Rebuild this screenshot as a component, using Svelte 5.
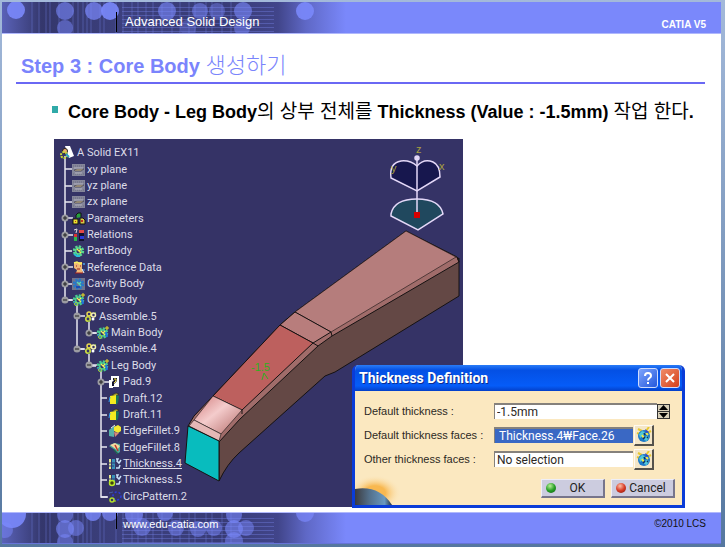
<script>
  const tree = [
    { label: 'A Solid EX11', level: 0, icon: 'part' },
    { label: 'xy plane', level: 1, icon: 'plane' },
    { label: 'yz plane', level: 1, icon: 'plane' },
    { label: 'zx plane', level: 1, icon: 'plane' },
    { label: 'Parameters', level: 1, icon: 'params' },
    { label: 'Relations', level: 1, icon: 'relations' },
    { label: 'PartBody', level: 1, icon: 'gear' },
    { label: 'Reference Data', level: 1, icon: 'reference' },
    { label: 'Cavity Body', level: 1, icon: 'cavity' },
    { label: 'Core Body', level: 1, icon: 'body' },
    { label: 'Assemble.5', level: 2, icon: 'assemble' },
    { label: 'Main Body', level: 3, icon: 'body' },
    { label: 'Assemble.4', level: 2, icon: 'assemble' },
    { label: 'Leg Body', level: 3, icon: 'body' },
    { label: 'Pad.9', level: 4, icon: 'pad' },
    { label: 'Draft.12', level: 4, icon: 'draft' },
    { label: 'Draft.11', level: 4, icon: 'draft' },
    { label: 'EdgeFillet.9', level: 4, icon: 'fillet' },
    { label: 'EdgeFillet.8', level: 4, icon: 'filletCut' },
    { label: 'Thickness.4', level: 4, icon: 'thickness', current: true },
    { label: 'Thickness.5', level: 4, icon: 'thicknessGear' },
    { label: 'CircPattern.2', level: 4, icon: 'pattern' },
  ];

  const planeTicks = [169, 186, 202, 251];
  const featureTicks = [398, 415, 431, 447, 464, 480, 497];
  const knots = [
    [65, 218, '+'], [65, 235, '+'], [65, 267, '+'], [65, 284, '+'], [65, 300, '-'],
    [77, 316, '-'], [89, 333, '+'], [77, 349, '-'], [89, 365, '-'], [101, 382, '+'],
  ];

  const topDots = [
    [14, 8, 9, 0.9], [63, 9, 9, 0.6], [63, 26, 8, 0.5], [92, 9, 9, 0.7], [108, 9, 9, 0.9],
    [165, 9, 9, 0.6], [198, 9, 8, 0.5], [215, 9, 8, 0.4], [241, 9, 9, 0.6], [240, 26, 8, 0.5],
    [186, 26, 8, 0.3], [303, 9, 9, 0.9],
  ];
  const bottomDots = [
    [10, 1, 14, 0.9], [3, 17, 8, 0.5], [63, 2, 8, 0.5], [63, 16, 9, 0.6], [63, 29, 8, 0.5],
    [74, 15, 8, 0.5], [91, 0, 8, 0.8], [108, 0, 8, 0.7], [132, 2, 9, 0.7], [140, 14, 9, 0.5],
    [163, 0, 8, 0.6], [174, 15, 8, 0.5], [196, 16, 8, 0.5], [212, 15, 8, 0.5], [232, 2, 8, 0.6],
    [232, 16, 9, 0.6], [232, 28, 9, 0.5], [244, 15, 8, 0.5], [303, 0, 9, 0.7],
  ];
  const bars = [30, 37, 44, 48, 57, 71, 76, 81, 85, 89, 98, 102, 114, 121, 130, 136, 144, 151, 160, 170, 178, 187, 193, 204, 210, 220, 229];
</script>

{#snippet band(id, dots)}
  <svg class="band-art" width="400" height="32" viewBox="0 0 400 32" aria-hidden="true">
    <defs>
      <linearGradient id={id}>
        <stop offset="0" stop-color="#5a62b8" />
        <stop offset="0.1" stop-color="#34376c" />
        <stop offset="0.3" stop-color="#3c407e" />
        <stop offset="0.55" stop-color="#383b76" />
        <stop offset="0.69" stop-color="#41458a" />
        <stop offset="0.76" stop-color="#5f68c6" />
        <stop offset="0.86" stop-color="#7a88fb" />
      </linearGradient>
    </defs>
    <rect width="400" height="32" fill="url(#{id})" />
    {#each bars as x}
      <path d="M{x} 0V32" stroke="#7682e6" stroke-opacity="0.4" />
    {/each}
    {#each [5, 9, 13, 17, 21, 25, 29] as y}
      <path d="M120 {y}.5H272" stroke="#7682e6" stroke-opacity="0.4" />
    {/each}
    {#each dots as [cx, cy, r, alpha]}
      <circle {cx} {cy} {r} fill="#7a88fb" fill-opacity={alpha} />
    {/each}
  </svg>
{/snippet}

{#snippet gear(main, accent)}
  <circle cx="6.500" cy="7" r="4" fill="none" stroke={main} stroke-width="3.400" stroke-dasharray="2 1.100" />
  <circle cx="6.500" cy="7" r="3" fill="none" stroke={main} stroke-width="1.500" />
  <path d="M5 5l4 4M9 5l-2 2" stroke={accent} stroke-width="1.300" />
{/snippet}

{#snippet icon(kind)}
  <svg class="icon" width="14" height="14" viewBox="0 0 14 14" aria-hidden="true">
    {#if kind === 'part'}
      <path d="M5 0h5l4 10-5 2-2-6z" fill="#fff" />
      <circle cx="5" cy="5" r="2.500" fill="#eeb070" stroke="#222" />
      <circle cx="4" cy="9" r="3" fill="none" stroke="#c8d838" stroke-width="2" stroke-dasharray="2 1" />
      <path d="M6 8l3 3" stroke="#30a8c0" stroke-width="2" />
    {:else if kind === 'plane'}
      <rect x="0" y="1" width="13" height="12" fill="#85869a" />
      <path d="M1 3h12M1 11h12" stroke="#6a6b80" stroke-dasharray="1 1" />
      <path d="M2 7l3-1h7l-3 2H3z" fill="#c0ac80" stroke="#4c4d60" stroke-width="0.800" />
      <path d="M2 5h9M3 10h7" stroke="#b4b4c0" />
    {:else if kind === 'params'}
      <path d="M4 6V3l2-2h3v4" fill="#28a040" stroke="#111" />
      <rect x="1" y="7" width="5" height="5" fill="#e8e030" stroke="#111" />
      <path d="M8 6h3l2 2v4H8z" fill="#d8c848" stroke="#111" />
      <path d="M3 9h1v1H3zM9 8h2v2H9z" fill="#c03020" />
    {:else if kind === 'relations'}
      <path d="M2 2l3-1-1 4M2 7h3" stroke="#ddd" fill="none" />
      <rect x="2" y="6" width="3" height="3" fill="#d83030" />
      <rect x="2" y="9" width="3" height="4" fill="#28b848" />
      <rect x="7" y="3" width="5" height="10" fill="#12122c" />
      <rect x="7" y="2" width="5" height="3" fill="#e04848" />
      <rect x="8" y="8" width="4" height="3" fill="#2838d8" />
    {:else if kind === 'gear'}
      {@render gear('#58d890', '#f0e850')}
      <path d="M2 10l3 2h3" stroke="#28c0d8" stroke-width="2" fill="none" />
    {:else if kind === 'reference'}
      <path d="M2 1h8v7l1 4H4l1-3-3-2z" fill="#f0b878" />
      <path d="M2 2l3-1 3 2 2-1" stroke="#f8f060" stroke-width="1.500" fill="none" />
      <path d="M4 5h1M8 5h1M5 8h3M3 12h8" stroke="#a02020" fill="none" />
      <path d="M10 8l2 4" stroke="#fff" />
      <path d="M11 3h2M12 2v2M11 9h2" stroke="#48a0f0" />
    {:else if kind === 'cavity'}
      <rect x="0" y="1" width="13" height="12" fill="#70748c" />
      {@render gear('#2878c8', '#60d8b0')}
      <path d="M4 10h4" stroke="#1840b0" stroke-width="1.500" fill="none" />
    {:else if kind === 'body'}
      {@render gear('#48cc90', '#f0f060')}
      <path d="M2 9l3 3M10 6l1 5" stroke="#2070e0" stroke-width="2" />
      <circle cx="4" cy="11" r="1.500" fill="none" stroke="#a8d830" />
      <path d="M11 0v4M9 2h4" stroke="#f0e020" />
    {:else if kind === 'assemble'}
      <circle cx="5" cy="4" r="2" fill="none" stroke="#e8d850" stroke-width="1.500" />
      <circle cx="9.500" cy="5" r="2" fill="none" stroke="#f4f0b0" stroke-width="1.500" />
      <circle cx="4" cy="9" r="2.200" fill="none" stroke="#d0e040" stroke-width="1.600" />
      <circle cx="9" cy="9" r="1.500" fill="#fff" />
      <path d="M4 11h2M11 3l1-1" stroke="#70a848" />
    {:else if kind === 'pad'}
      <path d="M3 1h8v11H3z" fill="#fff" />
      <path d="M1 5h4v8H1z" fill="#fff" />
      <path d="M5 3h4v3L6 9v2H4V7l2-2H5z" fill="#181830" />
      <path d="M6 4h2v2L6 8" stroke="#f0e040" fill="none" />
    {:else if kind === 'draft'}
      <path d="M4 3l4-2 3 1-3 2z" fill="#a8a030" stroke="#222" stroke-width="0.600" />
      <path d="M2 4l6-1v9H2z" fill="#f4ec20" />
      <path d="M8 3l3 1-1 7-2 2z" fill="#1c7858" />
      <path d="M2 5L1 10" stroke="#30a0f0" />
    {:else if kind === 'fillet'}
      <path d="M1 6l5-4 4 1-4 4v6l-5-1z" fill="#58b0a8" />
      <path d="M6 3l4-2 3 2v4l-3 2-4-2z" fill="#f4e830" />
      <path d="M6 8l5 1-4 4z" fill="#d88878" />
      <path d="M3 4l4-3" stroke="#eee" />
    {:else if kind === 'filletCut'}
      <path d="M1 5l5-3 6 1v8l-3 2-2-4z" fill="#48a898" />
      <path d="M2 4l5-2 5 3-3 4z" fill="#f4d8a0" />
      <path d="M7 4l3 6" stroke="#c03828" stroke-width="1.500" />
      <path d="M6 9l4 4" stroke="#206050" stroke-width="1.500" />
    {:else if kind === 'thickness' || kind === 'thicknessGear'}
      <path d="M1 2h2v10H1z" fill="#e8e890" />
      <path d="M4 2h3v10H4z" fill="#3890b8" />
      <path d="M8 2h2l-1 2 2 2 2-3M8 11h3l1-3" stroke="#c8e0f8" stroke-width="1.500" fill="none" />
      <path d="M1 6h6M1 9h5" stroke="#303870" />
      {#if kind === 'thicknessGear'}
        <circle cx="4" cy="10" r="2.500" fill="#404010" stroke="#b8e828" stroke-width="1.500" />
      {/if}
    {:else if kind === 'pattern'}
      <circle cx="9" cy="6" r="4" fill="none" stroke="#2c3ce0" stroke-width="1.500" stroke-dasharray="2 2" />
      <path d="M1 3l4-1" stroke="#4860a8" />
      <circle cx="4" cy="10" r="2" fill="none" stroke="#b0e028" stroke-width="1.500" />
      <path d="M6 11h2" stroke="#b0e028" />
    {/if}
  </svg>
{/snippet}

{#snippet listIcon()}
  <svg class="icon" width="16" height="16" viewBox="0 0 16 16" aria-hidden="true">
    <path d="M2 2l4 2M13 0l-3 4M15 4l-4 2M1 6l3 1" stroke="#e8c830" stroke-width="2" />
    <ellipse cx="8" cy="9" rx="6" ry="6" fill="#1c78c8" />
    <path d="M3 7l3-3 3 1-2 4-3 2zM10 9l3 1-2 4-3-1z" fill="#50c8d8" />
    <path d="M6 8l2 3M10 6l2 2" stroke="#f0e848" stroke-width="2" />
    <path d="M8 6l1 2M7 12l2-2M11 11l1-1" stroke="#103060" stroke-width="1.500" />
    <path d="M9 2l4 3-3 1z" fill="#3048d0" />
  </svg>
{/snippet}

<div class="slide">
  <header class="band">
    {@render band('topBand', topDots)}
    <span class="course">Advanced Solid Design</span>
    <strong>CATIA V5</strong>
  </header>

  <main>
    <h1>Step 3 : Core Body <span>생성하기</span></h1>

    <ul class="points">
      <li>Core Body - Leg Body<span>의 상부 전체를</span> Thickness (Value : -1.5mm) <span>작업 한다</span>.</li>
    </ul>

    <div class="workspace">
      <div class="viewport">
        <svg class="scene" viewBox="54 139 409 368" preserveAspectRatio="xMinYMin slice" aria-hidden="true">
          <defs>
            <linearGradient id="bend" x1="0" y1="0" x2="1" y2="1">
              <stop offset="0.1" stop-color="#d88c8c" />
              <stop offset="0.45" stop-color="#f4cccc" />
              <stop offset="0.9" stop-color="#bf7c7a" />
            </linearGradient>
          </defs>

          <g fill="none" stroke="#e8e8f0" stroke-width="1.500">
            <path d="M65 156V300H72M77 304V349H84M89 321V333H96M89 354V366H96M101 371V497H108" />
            {#each planeTicks as y}
              <path d="M65 {y}H72" />
            {/each}
            {#each featureTicks as y}
              <path d="M101 {y}H107" />
            {/each}
          </g>
          {#each knots as [x, y, sign]}
            <path d="M{x} {y}h8" stroke="#e8e8f0" stroke-width="1.500" />
            <circle cx={x} cy={y} r="3.500" fill="#9c9ca2" />
            <path d="M{x - 2} {y}h4" stroke="#222" />
            {#if sign === '+'}
              <path d="M{x} {y - 2}v4" stroke="#222" />
            {/if}
          {/each}

          <g stroke="#161212" stroke-linejoin="round">
            <path d="M219 441L238 418L314 346L329 336L459 258V296L335 372L325 376L239 453Q227 464 219 481Z" fill="#644845" />
            <path d="M188 426L194 416L213 396L280 325L295 312L406 231L457 257L459 262L332 336L318 346L240 419L219 442Z" fill="#a06c6a" />
            <path d="M295 312L406 231L456 257L331 332Z" fill="#b57d7c" stroke-width="0.600" />
            <path d="M280 325L295 312L331 332L313 343Z" fill="#b87d7c" />
            <path d="M213 396L280 325L313 343L242 410Z" fill="#bd605e" />
            <path d="M194 420L213 396L242 410L221 434Z" fill="url(#bend)" stroke-width="0.600" />
            <path d="M189 426L194 420L221 434L219 441Z" fill="#e5b8b6" stroke-width="0.600" />
            <path d="M188 426L219 441V481L185 463Z" fill="#08bcbe" />
            <path d="M313 343L318 346M331 332L332 336M242 410V414M457 257L459 262" fill="none" />
          </g>

          <g stroke="#e4d8f8" stroke-width="1.500">
            <path d="M391 178Q389 163 401 161Q410 160 417 166Q424 158 433 162Q440 165 440 177L417 191Z" fill="#17174e" />
            <path d="M391 214Q394 199 417 199Q440 199 443 214L418 230L391 216Z" fill="#20485e" />
            <path d="M417 158V214" />
            <circle cx="417" cy="158" r="2" fill="#e4d8f8" />
          </g>
          <rect x="414" y="212" width="6" height="6" fill="#d80000" />
          <g class="axis">
            <text x="416" y="153">z</text>
            <text x="391" y="172">y</text>
            <text x="439" y="170">x</text>
          </g>
          <text class="offset" x="251" y="371">-1.5</text>
          <path d="M264 373l-2 7M264 373l4 6" stroke="#30b020" fill="none" />
        </svg>

        <ul class="tree">
          {#each tree as node}
            <li style="--level: {node.level}">
              {@render icon(node.icon)}
              <span class:current={node.current}>{node.label}</span>
            </li>
          {/each}
        </ul>
      </div>

      <form class="dialog" aria-labelledby="dialog-title" on:submit|preventDefault>
        <div class="titlebar">
          <h2 id="dialog-title">Thickness Definition</h2>
          <button type="button" class="caption-btn" aria-label="Help">
            <svg width="18" height="18" viewBox="0 0 18 18" aria-hidden="true">
              <path d="M6 7Q6 4 9 4T12 7Q12 8 10.500 9T9 11.500" fill="none" stroke="#fff" stroke-width="2" />
              <rect x="8" y="13" width="2" height="2" fill="#fff" />
            </svg>
          </button>
          <button type="button" class="caption-btn close" aria-label="Close">
            <svg width="18" height="18" viewBox="0 0 18 18" aria-hidden="true">
              <path d="M5 5l8 8M13 5l-8 8" stroke="#fff" stroke-width="2" />
            </svg>
          </button>
        </div>

        <div class="dialog-body">
          <svg class="planet" width="50" height="32" viewBox="0 0 50 32" aria-hidden="true">
            <defs>
              <radialGradient id="glow">
                <stop offset="0.4" stop-color="#f8b850" />
                <stop offset="1" stop-color="#fbe8c0" stop-opacity="0" />
              </radialGradient>
              <linearGradient id="globe">
                <stop offset="0" stop-color="#3c3c40" />
                <stop offset="0.4" stop-color="#54718c" />
                <stop offset="0.8" stop-color="#6898c0" />
                <stop offset="1" stop-color="#26303c" />
              </linearGradient>
            </defs>
            <ellipse cx="20" cy="20" rx="26" ry="18" fill="url(#glow)" />
            <path d="M0 16Q24 12 37 32H0Z" fill="url(#globe)" />
          </svg>

          <div class="fields">
            <label for="thickness">Default thickness :</label>
            <div class="field spin">
              <input id="thickness" type="text" value="-1.5mm" />
              <div class="arrows">
                <button type="button" aria-label="Increase">
                  <svg width="11" height="6" viewBox="0 0 11 6" aria-hidden="true"><path d="M5.500 0L10 5H1z" /></svg>
                </button>
                <button type="button" aria-label="Decrease">
                  <svg width="11" height="6" viewBox="0 0 11 6" aria-hidden="true"><path d="M5.500 6L10 1H1z" /></svg>
                </button>
              </div>
            </div>

            <label for="faces">Default thickness faces :</label>
            <div class="field">
              <input id="faces" class="picked" type="text" value="Thickness.4₩Face.26" />
              <button type="button" class="list-btn" aria-label="Default faces list">{@render listIcon()}</button>
            </div>

            <label for="others">Other thickness faces :</label>
            <div class="field">
              <input id="others" type="text" value="No selection" />
              <button type="button" class="list-btn" aria-label="Other faces list">{@render listIcon()}</button>
            </div>
          </div>

          <div class="actions">
            <button type="submit" class="action"><i class="led"></i><span>OK</span></button>
            <button type="button" class="action"><i class="led red"></i><span>Cancel</span></button>
          </div>
        </div>
      </form>
    </div>
  </main>

  <footer class="band">
    {@render band('bottomBand', bottomDots)}
    <a href="http://www.edu-catia.com">www.edu-catia.com</a>
    <small>©2010 LCS</small>
  </footer>
</div>

<style>
  :global(body) {
    background: linear-gradient(#a3b9da, #55779f);
  }

  .slide {
    box-sizing: border-box;
    min-height: 100vh;
    padding: 2px 4px 3px 2px;
    display: flex;
    flex-direction: column;
    font-family: 'Liberation Sans', 'Noto Sans CJK KR', sans-serif;
  }

  .band {
    position: relative;
    box-sizing: border-box;
    height: 32px;
    display: flex;
    justify-content: space-between;
    align-items: center;
    padding: 9px 15px 0 114px;
    background: #7a88fb;
    border-bottom: 1px solid #b0b8fc;
    color: #fff;
    overflow: hidden;
  }

  .band-art {
    position: absolute;
    left: 0;
    top: 0;
  }

  .course,
  footer a {
    position: relative;
    font-size: 13px;
    line-height: 20px;
    padding-left: 8px;
    border-left: 1px solid #000;
  }

  .band strong {
    font-size: 10px;
    padding-top: 4px;
  }

  footer.band {
    border-top: 1px solid #b0b8fc;
    border-bottom: 1px solid #6673d8;
    padding-top: 0;
    align-items: flex-start;
  }

  footer a {
    font-size: 11px;
    line-height: 22px;
    height: 16px;
    padding-left: 6px;
    color: #fff;
    text-decoration: none;
  }

  footer small {
    font-size: 10px;
    line-height: 22px;
    color: #111;
  }

  main {
    flex: 1;
    padding: 18px 16px 4px 14px;
    background: #fff;
  }

  h1 {
    margin: 0;
    padding: 0 5px 2px;
    border-bottom: 2px solid #6a68f4;
    color: #7a84fc;
    font-size: 20px;
    line-height: 28px;
  }

  h1 span {
    font-size: 22px;
    line-height: 20px;
    font-weight: 300;
  }

  .points {
    list-style: none;
    margin: 0;
    padding: 15px 0 0 52px;
    font-size: 18px;
    line-height: 26px;
    font-weight: bold;
    white-space: nowrap;
  }

  .points span {
    font-size: 19px;
    line-height: 20px;
    font-weight: 400;
  }

  .points li {
    position: relative;
  }

  .points li::before {
    content: '';
    position: absolute;
    left: -16px;
    top: 7px;
    width: 6px;
    height: 7px;
    background: #30aaa8;
  }

  .workspace {
    position: relative;
    display: flex;
    margin: 14px 20px 0 38px;
  }

  .viewport {
    position: relative;
    width: 409px;
    background: #353366;
  }

  .scene {
    position: absolute;
    width: 100%;
    height: 100%;
  }

  .axis {
    fill: #a8a040;
    font-size: 11px;
  }

  .offset {
    fill: #30b020;
    font-size: 11px;
  }

  .tree {
    position: relative;
    list-style: none;
    box-sizing: border-box;
    min-height: 368px;
    margin: 0;
    padding: 6px 0 2px;
    display: flex;
    flex-direction: column;
    font-family: Roboto, 'Liberation Sans', sans-serif;
    font-size: 11px;
    line-height: 16px;
    color: #dcdce8;
  }

  .tree li {
    flex: 1;
    display: flex;
    align-items: center;
    gap: 1px;
    padding-left: calc(6px + var(--level) * 12px);
  }

  .tree li:first-child {
    gap: 3px;
  }

  .icon {
    flex: none;
  }

  .current {
    text-decoration: underline;
  }

  .dialog {
    position: absolute;
    right: 0;
    bottom: -1px;
    box-sizing: border-box;
    width: 333px;
    border: 3px solid #0a3cd8;
    border-top: 0;
    border-radius: 6px 6px 0 0;
    overflow: hidden;
    background: #fbe8c0;
    font-family: Roboto, 'Noto Sans CJK KR', sans-serif;
    font-size: 12px;
    color: #2c2824;
  }

  .titlebar {
    display: flex;
    align-items: center;
    gap: 2px;
    height: 26px;
    padding: 0 2px 0 4px;
    background: linear-gradient(#2a7cf8, #0450e4 20%, #055cf8 80%, #0440c8);
  }

  h2 {
    flex: 1;
    margin: 0;
    color: #fff;
    font-size: 14px;
    text-shadow: 1px 1px #0a2c90;
  }

  .caption-btn {
    display: flex;
    box-sizing: border-box;
    width: 20px;
    height: 20px;
    padding: 0;
    border: 1px solid #d0dcfc;
    border-radius: 3px;
    background: linear-gradient(135deg, #7ea4fc, #2458dc);
  }

  .caption-btn.close {
    background: linear-gradient(135deg, #f08c68, #d4401c);
  }

  .dialog-body {
    position: relative;
    padding: 8px 7px 7px 9px;
  }

  .planet {
    position: absolute;
    left: 0;
    bottom: 0;
  }

  .fields {
    display: grid;
    grid-template-columns: 130px minmax(0, 1fr);
    grid-auto-rows: 24px;
    align-items: center;
    white-space: nowrap;
  }

  .fields label {
    font-family: 'Liberation Sans', sans-serif;
    font-size: 11px;
  }

  .field {
    display: flex;
    align-items: center;
    gap: 1px;
    padding-right: 21px;
  }

  .field.spin {
    gap: 0;
    padding-right: 5px;
  }

  .field input {
    flex: 1;
    min-width: 0;
    box-sizing: border-box;
    height: 16px;
    padding: 0 2px;
    border: 0;
    border-top: 2px solid #85817c;
    border-left: 1px solid #85817c;
    background: #fff;
    color: #2c2824;
    font: inherit;
  }

  .field .picked {
    padding-left: 4px;
    background: #3a68c4;
    color: #fff;
  }

  .arrows {
    display: flex;
    flex-direction: column;
    background: #d8d0b8;
    border: 1px solid #333;
  }

  .arrows button {
    display: flex;
    padding: 0;
    border: 0;
    background: none;
  }

  .arrows button + button {
    border-top: 1px solid #333;
  }

  .list-btn {
    display: flex;
    flex: none;
    align-items: center;
    justify-content: center;
    box-sizing: border-box;
    width: 20px;
    height: 21px;
    padding: 0;
    border: 1px solid #fffaf0;
    border-right: 2px solid #55524c;
    border-bottom: 2px solid #55524c;
    background: #f4e6c8;
  }

  .actions {
    display: flex;
    justify-content: flex-end;
    gap: 6px;
    padding-top: 8px;
  }

  .action {
    display: flex;
    align-items: center;
    box-sizing: border-box;
    width: 64px;
    height: 19px;
    padding: 0 4px;
    border: 1px solid #eeeef8;
    border-right: 2px solid #77758c;
    border-bottom: 2px solid #77758c;
    background: #ccccdf;
    color: #222;
    font: inherit;
  }

  .action span {
    flex: 1;
    text-align: center;
  }

  .led {
    width: 10px;
    height: 10px;
    border-radius: 50%;
    background: radial-gradient(circle at 40% 30%, #b8f098, #28a028 50%, #0c5c10);
  }

  .led.red {
    background: radial-gradient(circle at 40% 30%, #fcc0a8, #d83c28 50%, #7c1408);
  }
</style>
